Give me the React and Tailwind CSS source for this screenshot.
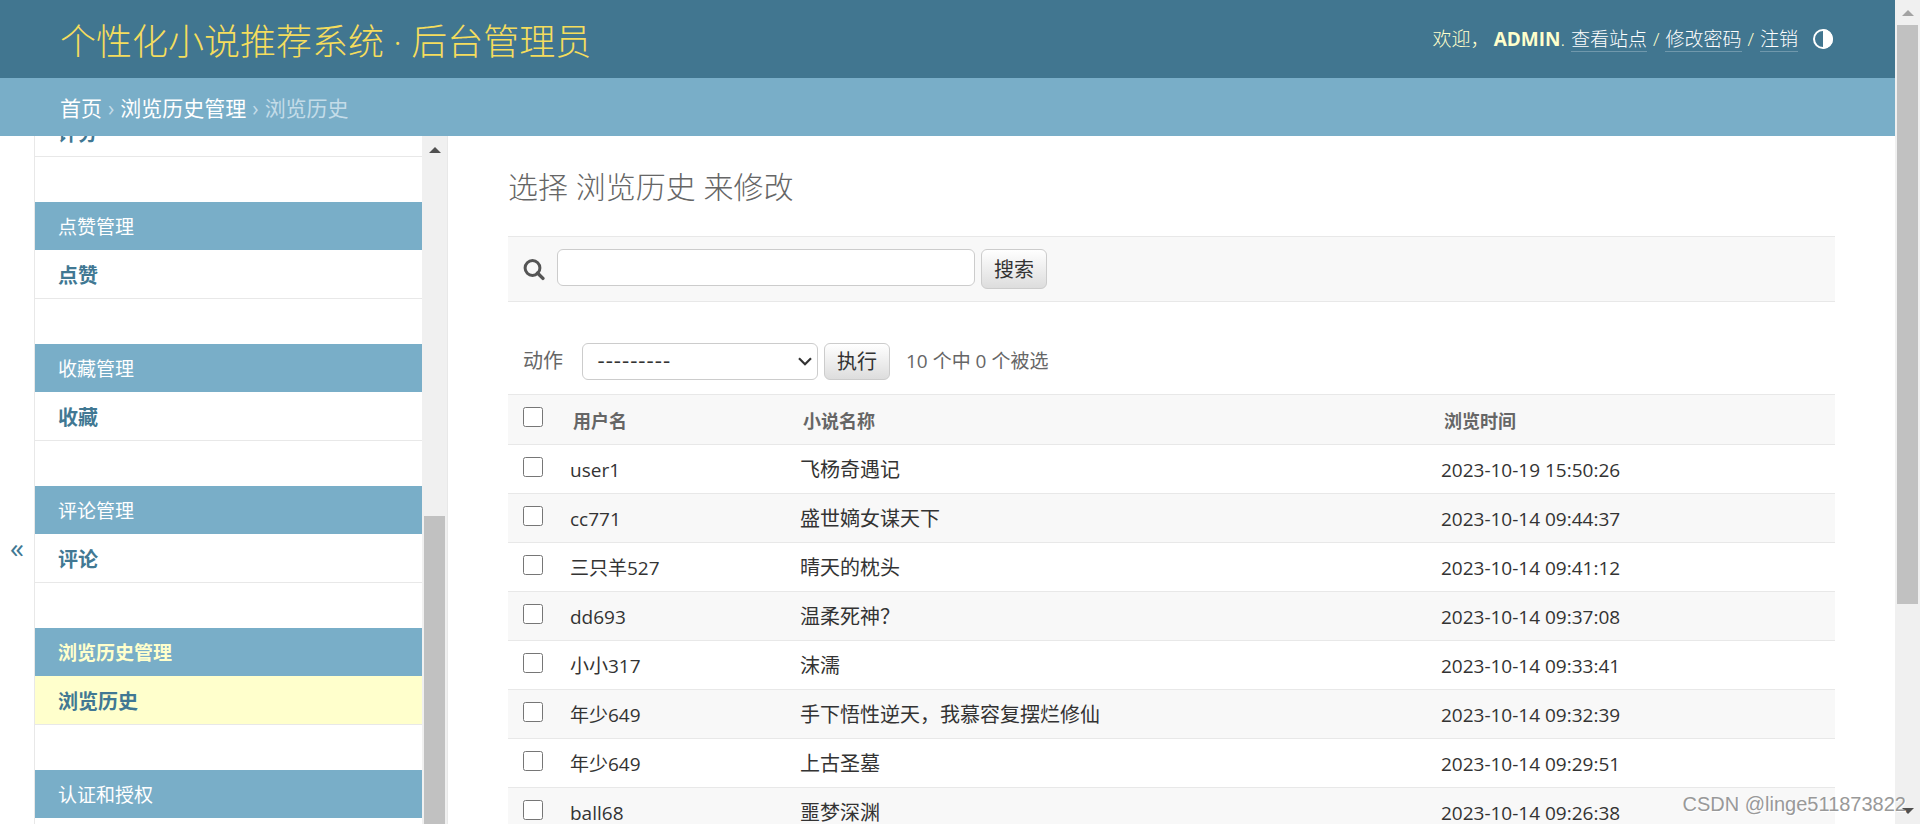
import React from 'react';

const modules = [
    { name: '点赞管理', model: '点赞' },
    { name: '收藏管理', model: '收藏' },
    { name: '评论管理', model: '评论' },
    { name: '浏览历史管理', model: '浏览历史', current: true },
];

const records = [
    { user: 'user1', novel: '飞杨奇遇记', time: '2023-10-19 15:50:26' },
    { user: 'cc771', novel: '盛世嫡女谋天下', time: '2023-10-14 09:44:37' },
    { user: '三只羊527', novel: '晴天的枕头', time: '2023-10-14 09:41:12' },
    { user: 'dd693', novel: '温柔死神？', time: '2023-10-14 09:37:08' },
    { user: '小小317', novel: '沫濡', time: '2023-10-14 09:33:41' },
    { user: '年少649', novel: '手下悟性逆天，我慕容复摆烂修仙', time: '2023-10-14 09:32:39' },
    { user: '年少649', novel: '上古圣墓', time: '2023-10-14 09:29:51' },
    { user: 'ball68', novel: '噩梦深渊', time: '2023-10-14 09:26:38' },
];

const ThemeIcon = () => (
    <svg viewBox="0 0 20 20" className="size-5" aria-hidden="true">
        <circle cx="10" cy="10" r="9" fill="none" stroke="#fff" strokeWidth="2" />
        <path d="M10 0a10 10 0 0 1 0 20z" fill="#fff" />
    </svg>
);

const SearchIcon = () => (
    <svg viewBox="0 0 22 22" className="size-[22px]" aria-hidden="true">
        <circle cx="9.5" cy="9" r="7.4" fill="none" stroke="#555" strokeWidth="3" />
        <path d="M14.5 14l5.4 5.4" stroke="#555" strokeWidth="3.4" strokeLinecap="round" />
    </svg>
);

const ScrollArrow = ({ down, color }) => (
    <svg viewBox="0 0 12 6" className="h-1.5 w-3 shrink-0" aria-hidden="true">
        <path d={down ? 'M0 0h12L6 6z' : 'M0 6h12L6 0z'} fill={color} />
    </svg>
);

const Header = () => (
    <header className="flex h-[78px] shrink-0 items-center justify-between bg-[#417690] pr-[62px] pl-15 text-[#ffffcc]">
        <h1 className="pt-1.5 text-[36px] leading-[44px] font-light text-[#f5dd5d]">
            <a href="#">个性化小说推荐系统 · 后台管理员</a>
        </h1>
        <div className="flex items-center text-[19px] leading-6 font-light">
            <span>欢迎，</span>
            <strong className="ml-1 font-bold">ADMIN</strong>
            <span>.</span>
            <a href="#" className="ml-1.5 border-b border-white/25 text-white">查看站点</a>
            <span className="mx-1.5">/</span>
            <a href="#" className="border-b border-white/25 text-white">修改密码</a>
            <span className="mx-1.5">/</span>
            <a href="#" className="border-b border-white/25 text-white">注销</a>
            <button type="button" aria-label="切换主题" className="ml-[15px]">
                <ThemeIcon />
            </button>
        </div>
    </header>
);

const Breadcrumbs = () => (
    <nav className="flex h-[58px] shrink-0 items-center gap-1.5 bg-[#79aec8] px-15 pt-0.5 text-[21px] leading-[30px] text-[#c4dce8]">
        <a href="#" className="text-white">首页</a>
        <span>›</span>
        <a href="#" className="text-white">浏览历史管理</a>
        <span>›</span>
        <span>浏览历史</span>
    </nav>
);

const ModuleCaption = ({ name, current }) => (
    <h2 className="h-12 bg-[#79aec8] px-[23px] pt-px text-[19px] leading-12">
        <a href="#" className={current ? 'font-bold text-[#ffffcc]' : 'text-white'}>{name}</a>
    </h2>
);

const ModelRow = ({ model, current }) => (
    <div className={`h-[49px] border-b border-[#e8e8e8] px-[23px] pt-0.5 text-[20px] leading-12 ${current ? 'bg-[#ffffcc]' : ''}`}>
        <a href="#" className="font-bold text-[#417893]">{model}</a>
    </div>
);

const Sidebar = () => (
    <div className="flex min-h-0 shrink-0">
        <button
            type="button"
            aria-label="切换导航"
            className="flex w-[35px] items-center justify-center border-r border-[#e8e8e8] pt-[134px] pr-2 pl-2 text-[28px] leading-8 text-[#417893]"
        >
            «
        </button>
        <nav className="w-[387px] overflow-hidden">
            <div className="-mt-7 mb-[45px]">
                <ModelRow model="评分" />
            </div>
            {modules.map((m) => (
                <section key={m.name} className="mb-[45px]">
                    <ModuleCaption name={m.name} current={m.current} />
                    <ModelRow model={m.model} current={m.current} />
                </section>
            ))}
            <ModuleCaption name="认证和授权" />
        </nav>
        <div className="flex w-[26px] flex-col items-center border-r border-[#e8e8e8] bg-[#f0f0f0] pt-[11px]">
            <ScrollArrow color="#505050" />
            <div className="mt-[363px] w-[21px] grow bg-[#c1c1c1]" />
        </div>
    </div>
);

const buttonClass =
    'rounded-md border border-[#ccc] bg-linear-to-b from-white to-[#dddddd] px-3 pt-0.5 text-[20px] leading-8 text-[#333]';

const SearchBar = () => (
    <form className="flex h-[66px] items-start border-y border-[#e8e8e8] bg-[#f8f8f8] pt-3 pl-[15px]">
        <label htmlFor="searchbar" className="mt-2.5">
            <SearchIcon />
        </label>
        <input
            id="searchbar"
            type="text"
            aria-label="搜索"
            className="ml-3 h-[37px] w-[418px] rounded-md border border-[#ccc] bg-white px-2 text-[20px]"
        />
        <button type="button" className={`ml-1.5 h-10 ${buttonClass}`}>搜索</button>
    </form>
);

const Actions = () => (
    <div className="mt-10 mb-[14px] flex h-[38px] items-center pl-[15px] text-[20px] text-[#666]">
        <label htmlFor="action">动作</label>
        <div className="relative ml-[19px]">
            <select
                id="action"
                className="block h-[37px] w-[236px] appearance-none rounded-md border border-[#ccc] bg-white px-[14px] font-['Lato'] text-[22px] leading-8 text-[#333]"
            >
                <option>---------</option>
            </select>
            <svg viewBox="0 0 14 9" className="pointer-events-none absolute top-3.5 right-1.5 h-[9px] w-3.5" aria-hidden="true">
                <path d="M1 1.2l6 6 6-6" fill="none" stroke="#333" strokeWidth="2.2" />
            </svg>
        </div>
        <button type="button" className={`ml-1.5 h-[37px] ${buttonClass}`}>执行</button>
        <span className="ml-4 text-[19px]">10 个中 0 个被选</span>
    </div>
);

const ResultTable = () => (
    <table className="w-full table-fixed border-separate border-spacing-0 text-left">
        <thead>
            <tr className="h-[51px] bg-[#f8f8f8] text-[18px] text-[#666]">
                <th className="w-[50px] border-y border-[#e8e8e8] pt-3 pl-[15px] align-top">
                    <input type="checkbox" aria-label="全选" className="block size-5" />
                </th>
                <th className="w-[230px] border-y border-[#e8e8e8] pt-1 pl-[15px] font-bold">用户名</th>
                <th className="w-[48.3%] border-y border-[#e8e8e8] pt-1 pl-[15px] font-bold">小说名称</th>
                <th className="border-y border-[#e8e8e8] pt-1 pl-[15px] font-bold">浏览时间</th>
            </tr>
        </thead>
        <tbody>
            {records.map((row) => (
                <tr key={row.time} className="h-[49px] text-[19px] leading-6 text-[#333] even:bg-[#f8f8f8]">
                    <td className="border-b border-[#e8e8e8] pt-3 pl-[15px] align-top">
                        <input type="checkbox" aria-label={row.user} className="block size-5" />
                    </td>
                    <td className="border-b border-[#e8e8e8] pt-0.5 pl-3">{row.user}</td>
                    <td className="border-b border-[#e8e8e8] pt-0.5 pl-3 text-[20px]">{row.novel}</td>
                    <td className="border-b border-[#e8e8e8] pt-0.5 pl-3">{row.time}</td>
                </tr>
            ))}
        </tbody>
    </table>
);

const App = () => {
    return (
        <div className="relative flex h-screen overflow-hidden bg-white font-['Open_Sans','Noto_Sans_CJK_SC',sans-serif]">
            <div className="flex min-w-0 grow flex-col">
                <Header />
                <Breadcrumbs />
                <div className="flex min-h-0 grow">
                    <Sidebar />
                    <main className="min-w-0 grow overflow-hidden px-15 pt-[30px]">
                        <h2 className="mb-7 text-[30px] leading-[42px] font-light text-[#666]">选择 浏览历史 来修改</h2>
                        <SearchBar />
                        <Actions />
                        <ResultTable />
                    </main>
                </div>
            </div>
            <div className="flex w-[25px] shrink-0 flex-col items-center justify-between bg-[#f0f0f0] py-2.5">
                <ScrollArrow color="#a3a3a3" />
                <div className="mt-[9px] mb-auto h-[72%] w-[21px] bg-[#c1c1c1]" />
                <ScrollArrow down color="#505050" />
            </div>
            <span className="absolute right-[14px] bottom-1.5 font-['Liberation_Sans'] text-[20px] leading-7 text-[#999] text-shadow-[1px_1px_0_#fff]">
                CSDN @linge511873822
            </span>
        </div>
    );
};

export default App;
